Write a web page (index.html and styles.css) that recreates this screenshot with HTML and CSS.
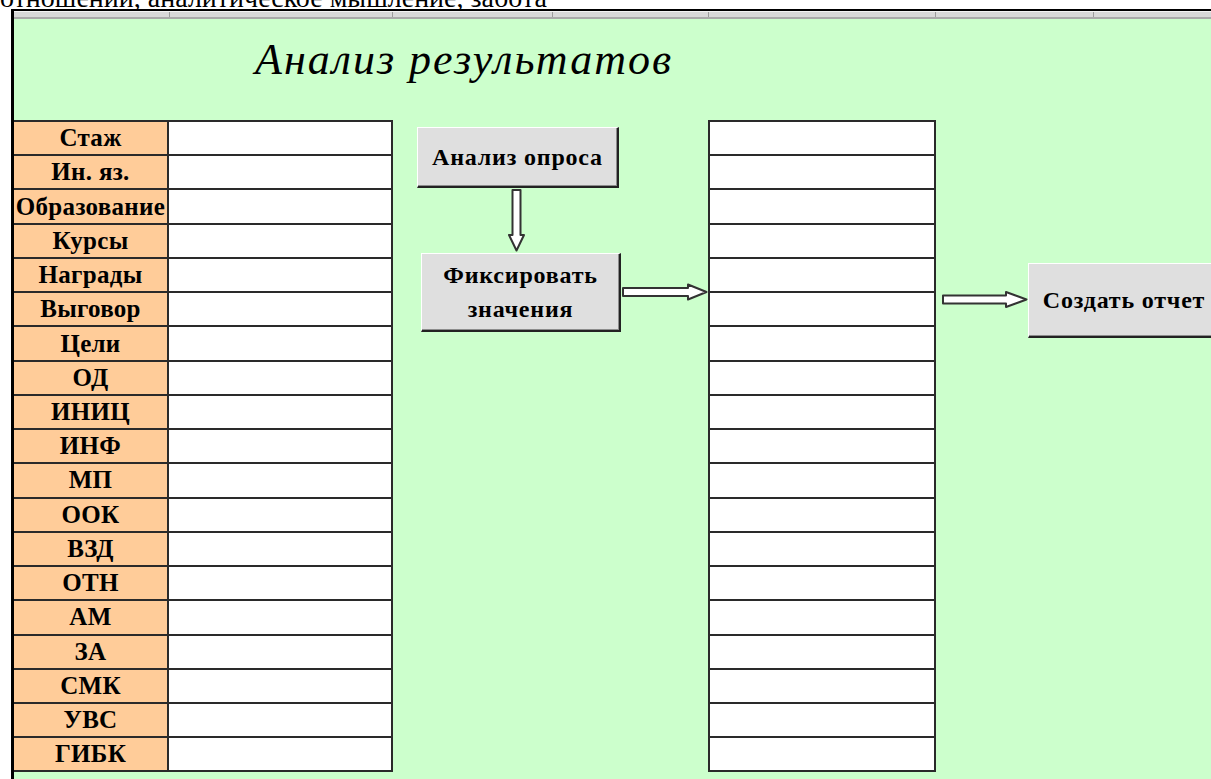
FILE: index.html
```html
<!DOCTYPE html>
<html lang="ru">
<head>
<meta charset="utf-8">
<title>Анализ результатов</title>
<link rel="stylesheet" href="styles.css">
</head>
<body>
<div class="caption"><span>отношений, аналитическое мышление, забота</span></div>
<div class="sheet">
  <div class="colhead"><span></span><span></span><span></span><span></span><span></span><span></span><span></span></div>
  <div class="canvas">
    <h1 class="title">Анализ результатов</h1>
    <div class="board">
      <div class="grid grid-left">
        <div class="row"><div class="label">Стаж</div><div class="value"></div></div>
        <div class="row"><div class="label">Ин. яз.</div><div class="value"></div></div>
        <div class="row"><div class="label">Образование</div><div class="value"></div></div>
        <div class="row"><div class="label">Курсы</div><div class="value"></div></div>
        <div class="row"><div class="label">Награды</div><div class="value"></div></div>
        <div class="row"><div class="label">Выговор</div><div class="value"></div></div>
        <div class="row"><div class="label">Цели</div><div class="value"></div></div>
        <div class="row"><div class="label">ОД</div><div class="value"></div></div>
        <div class="row"><div class="label">ИНИЦ</div><div class="value"></div></div>
        <div class="row"><div class="label">ИНФ</div><div class="value"></div></div>
        <div class="row"><div class="label">МП</div><div class="value"></div></div>
        <div class="row"><div class="label">ООК</div><div class="value"></div></div>
        <div class="row"><div class="label">ВЗД</div><div class="value"></div></div>
        <div class="row"><div class="label">ОТН</div><div class="value"></div></div>
        <div class="row"><div class="label">АМ</div><div class="value"></div></div>
        <div class="row"><div class="label">ЗА</div><div class="value"></div></div>
        <div class="row"><div class="label">СМК</div><div class="value"></div></div>
        <div class="row"><div class="label">УВС</div><div class="value"></div></div>
        <div class="row"><div class="label">ГИБК</div><div class="value"></div></div>
      </div>

      <div class="flow">
        <button class="btn btn-survey" type="button">Анализ опроса</button>
        <svg class="arrow-down" width="17" height="63" viewBox="0 0 17 63">
          <path d="M4.5 1 H12.5 V46 H16 L8.5 61.5 L1 46 H4.5 Z"/>
        </svg>
        <div class="flow-row">
          <button class="btn btn-fix" type="button">Фиксировать<br>значения</button>
          <svg class="arrow-link" width="87" height="18" viewBox="0 0 87 18">
            <path d="M2 5 H67 V1.5 L85.5 9 L67 16.5 V13 H2 Z"/>
          </svg>
        </div>
      </div>

      <div class="grid grid-right">
        <div class="row"><div class="value"></div></div>
        <div class="row"><div class="value"></div></div>
        <div class="row"><div class="value"></div></div>
        <div class="row"><div class="value"></div></div>
        <div class="row"><div class="value"></div></div>
        <div class="row"><div class="value"></div></div>
        <div class="row"><div class="value"></div></div>
        <div class="row"><div class="value"></div></div>
        <div class="row"><div class="value"></div></div>
        <div class="row"><div class="value"></div></div>
        <div class="row"><div class="value"></div></div>
        <div class="row"><div class="value"></div></div>
        <div class="row"><div class="value"></div></div>
        <div class="row"><div class="value"></div></div>
        <div class="row"><div class="value"></div></div>
        <div class="row"><div class="value"></div></div>
        <div class="row"><div class="value"></div></div>
        <div class="row"><div class="value"></div></div>
        <div class="row"><div class="value"></div></div>
      </div>

      <div class="report">
        <svg class="arrow-report" width="88" height="19" viewBox="0 0 88 19">
          <path d="M3 5.5 H66 V2 L86.5 9.5 L66 17 V13.5 H3 Z"/>
        </svg>
        <button class="btn btn-report" type="button">Создать отчет</button>
      </div>
    </div>
  </div>
</div>
</body>
</html>
```

FILE: styles.css
```css
html, body {
  margin: 0;
  overflow: hidden;
}

body {
  width: 1211px;
  height: 779px;
  background: #ffffff;
  color: #000000;
  font-family: "Liberation Serif", "Times New Roman", serif;
}

/* last line of the text above the sheet, cut off by the window top */
.caption {
  height: 9px;
  overflow: hidden;
  font-size: 28px;
  line-height: 28px;
  white-space: nowrap;
}

.caption span {
  display: block;
  margin-top: -16px;
}

/* the spreadsheet area */
.sheet {
  box-sizing: border-box;
  height: 770px;
  margin-left: 11px;
  border-top: 2px solid #000000;
  border-left: 3px solid #000000;
  background: #ccffcc;
  overflow: hidden;
}

/* column header strip */
.colhead {
  display: grid;
  grid-template-columns: 155px 223px 160px 156px 227px 158px 1fr;
  box-sizing: border-box;
  height: 8px;
  border-top: 1px solid #f4f4f4;
  border-bottom: 2px solid #aaaaaa;
  background: #d9d9d9;
}

.colhead span + span {
  border-left: 1px solid #9c9c9c;
}

.title {
  box-sizing: border-box;
  height: 101px;
  margin: 0;
  padding: 19px 0 0 241px;
  font-size: 44px;
  line-height: 44px;
  letter-spacing: 2px;
  font-style: italic;
  font-weight: normal;
  white-space: nowrap;
}

.board {
  display: flex;
  align-items: flex-start;
}

.board > * {
  flex: none;
}

/* tables */
.grid {
  border-top: 2px solid #2a2a2a;
}

.grid-left {
  width: 377px;
  border-right: 2px solid #2a2a2a;
}

.grid-right {
  width: 224px;
  border-left: 2px solid #2a2a2a;
  border-right: 2px solid #2a2a2a;
}

.row {
  display: flex;
  box-sizing: border-box;
  height: 34.24px;
  border-bottom: 2px solid #2a2a2a;
}

.label {
  display: flex;
  align-items: center;
  justify-content: center;
  width: 153px;
  flex: none;
  border-right: 2px solid #2a2a2a;
  background: #ffcc99;
  font-size: 25px;
  font-weight: bold;
  letter-spacing: 0.3px;
  white-space: nowrap;
}

.value {
  flex: 1;
  background: #ffffff;
}

/* buttons */
.btn {
  display: flex;
  align-items: center;
  justify-content: center;
  flex: none;
  box-sizing: border-box;
  padding: 0;
  border-style: solid;
  border-width: 1px 2px 2px 1px;
  border-color: #ffffff #222222 #222222 #ffffff;
  box-shadow: inset -1px -1px 0 #8c8c8c;
  background: #dfdfdf;
  color: #000000;
  font-family: "Liberation Serif", "Times New Roman", serif;
  font-size: 24px;
  font-weight: bold;
  letter-spacing: 0.8px;
  line-height: 34px;
  text-align: center;
  white-space: nowrap;
}

/* flow chart between the tables */
.flow {
  display: flex;
  flex-direction: column;
  align-items: flex-start;
  width: 315px;
}

.btn-survey {
  width: 202px;
  height: 61px;
  margin: 7px 0 0 24px;
}

.arrow-down {
  display: block;
  margin: 1px 0 0 115px;
}

.flow-row {
  display: flex;
  align-items: flex-start;
  margin: 1px 0 0 28px;
}

.btn-fix {
  width: 200px;
  height: 79px;
}

.arrow-link {
  display: block;
  flex: none;
  margin-top: 30px;
}

.report {
  display: flex;
  align-items: flex-start;
  margin-left: 4px;
}

.arrow-report {
  display: block;
  flex: none;
  margin-top: 170px;
}

.btn-report {
  width: 193px;
  height: 75px;
  margin-top: 143px;
}

svg path {
  fill: #ffffff;
  stroke: #333333;
  stroke-width: 2;
  stroke-linejoin: round;
}
```
